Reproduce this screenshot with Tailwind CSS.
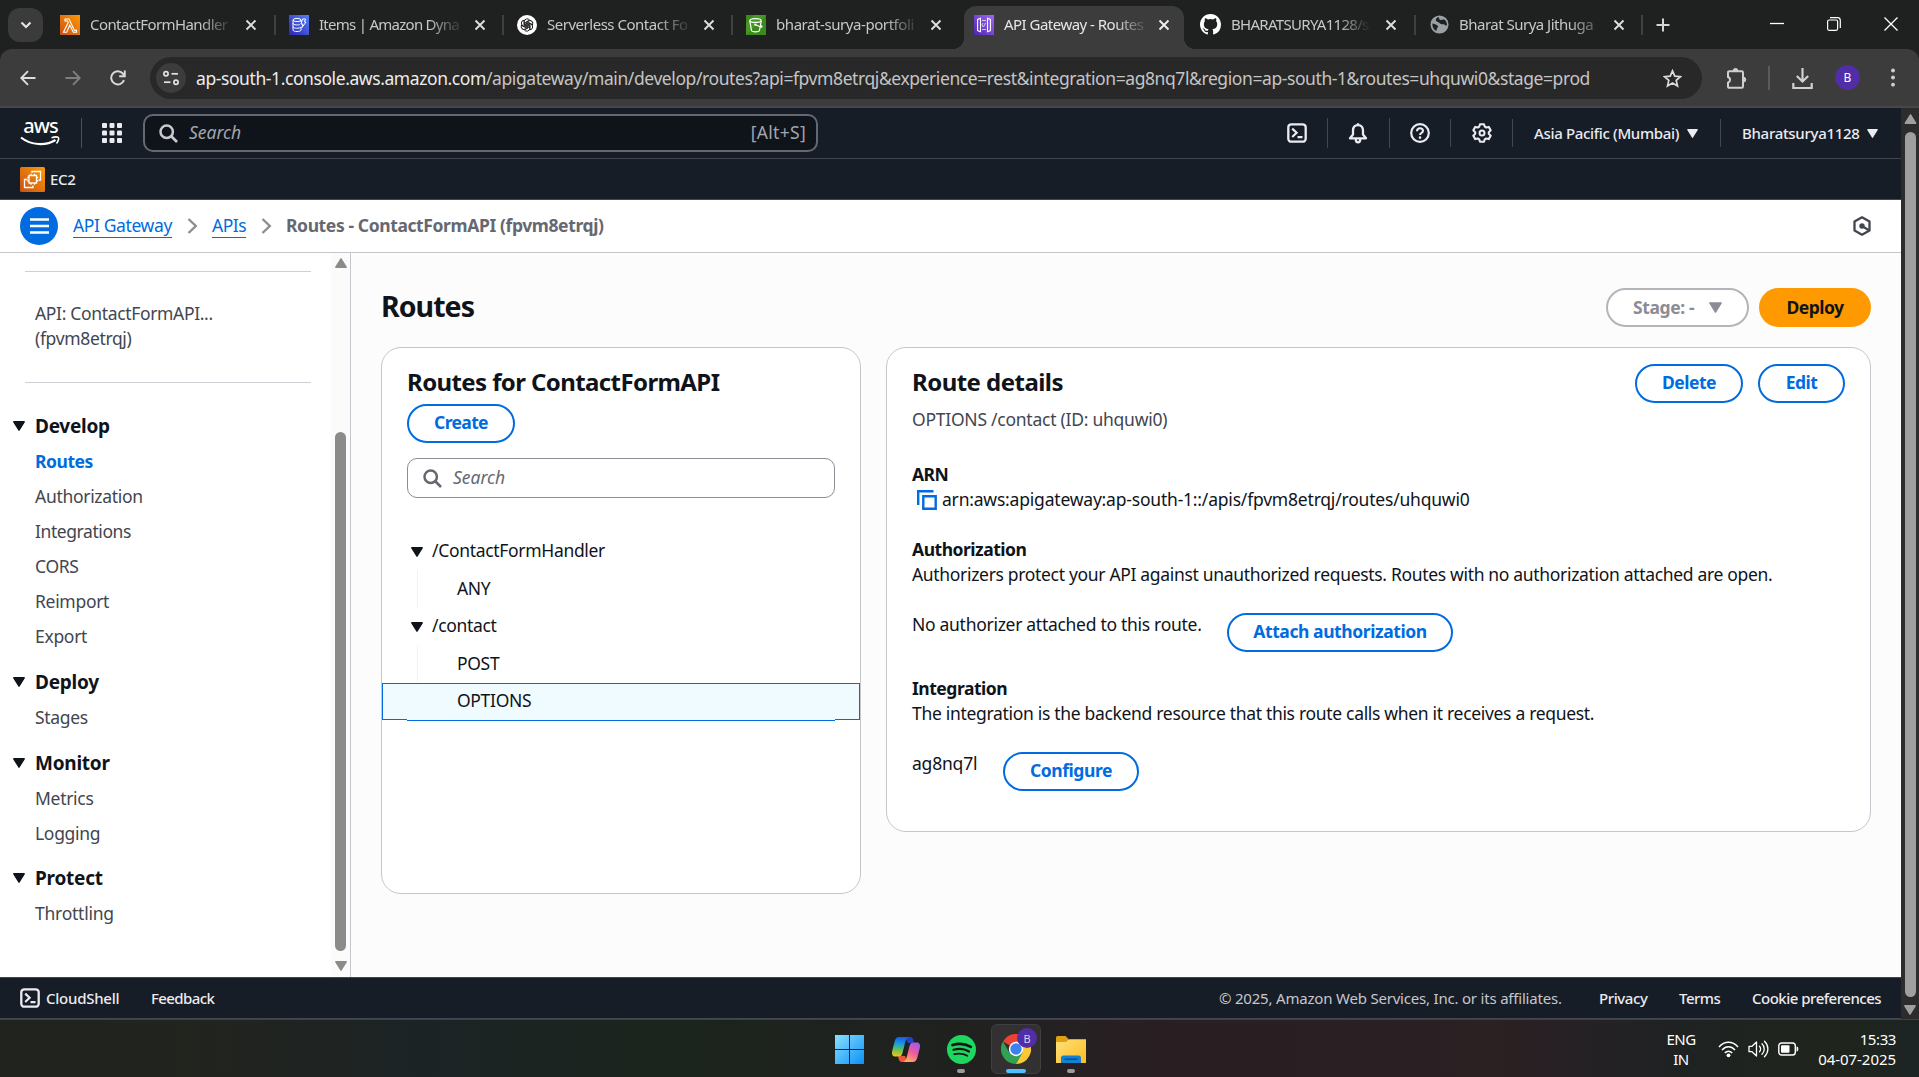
<!DOCTYPE html>
<html lang="en">
<head>
<meta charset="utf-8">
<title>API Gateway - Routes</title>
<script src="https://cdn.jsdelivr.net/npm/@tailwindcss/browser@4"></script>
</head>
<body class="h-[1077px] w-[1919px] overflow-hidden bg-[#1f2120] font-['Noto_Sans',sans-serif] text-[17.5px] leading-[25px] text-[#0f141a]">
<svg class="hidden">
  <symbol id="x" viewBox="0 0 12 12"><path d="M1.5 1.5l9 9M10.5 1.5l-9 9" stroke="currentColor" stroke-width="1.9" fill="none"/></symbol>
  <symbol id="tri" viewBox="0 0 12 10"><path d="M.8 .8h10.400L6 9.200z" fill="currentColor" stroke="currentColor" stroke-width="1.400" stroke-linejoin="round"/></symbol>
  <symbol id="mag" viewBox="0 0 19 19"><circle cx="7.7" cy="7.7" r="6.2" fill="none" stroke="currentColor" stroke-width="2.5"/><path d="M12 12l6 6" stroke="currentColor" stroke-width="2.6"/></symbol>
  <symbol id="shell" viewBox="0 0 20 20"><rect x="1.3" y="1.3" width="17.4" height="17.4" rx="3" fill="none" stroke="currentColor" stroke-width="2.3"/><path d="M5.2 5.6l4.4 4.2-4.4 4.2M10.5 14.2H15.500" fill="none" stroke="currentColor" stroke-width="2.2"/></symbol>
  <symbol id="chev" viewBox="0 0 11 16"><path d="M1.500 1l7.300 7-7.300 7" fill="none" stroke="#8c8c94" stroke-width="2.400"/></symbol>
</svg>
<div class="flex h-full flex-col">

<!-- tab strip -->
<div class="flex h-[49px] shrink-0 items-stretch bg-[#1f2120] text-[15px] text-[#c7c7c7]">
  <div class="flex w-12 shrink-0 items-center pl-2"><div class="flex h-[34px] w-[35px] items-center justify-center rounded-xl bg-[#3b3b3b]"><svg class="h-[8px] w-[12px]" viewBox="0 0 12 8"><path d="M1.500 1.500L6 6l4.500-4.500" fill="none" stroke="#e3e3e3" stroke-width="2.200"/></svg></div></div>

  <div class="flex w-[228px] shrink-0 items-center pl-3">
    <svg class="h-5 w-5 shrink-0" viewBox="0 0 20 20"><defs><linearGradient id="or" x1="0" y1="1" x2="1" y2="0"><stop stop-color="#c8511b"/><stop offset="1" stop-color="#f90"/></linearGradient></defs><rect width="20" height="20" fill="url(#or)"/><path d="M5 4h4l5.500 11.500L16.500 15v2.300h-3.200L9.800 10 6.700 17.300H3.500L8.200 7.500 7.500 6H5z" fill="none" stroke="#fff" stroke-width="1.100"/></svg>
    <span class="ml-2.5 w-[140px] overflow-hidden whitespace-nowrap tracking-[-0.58px] [mask-image:linear-gradient(to_right,black_78%,rgba(0,0,0,0.2)_98%)]">ContactFormHandler</span>
    <svg class="ml-[15px] h-3 w-3 text-[#dedede]"><use href="#x"/></svg><div class="ml-auto h-5 w-0.5 bg-[#3f4140]"></div>
  </div>
  <div class="flex w-[228px] shrink-0 items-center pl-[13px]">
    <svg class="h-5 w-5 shrink-0" viewBox="0 0 20 20"><defs><linearGradient id="bl" x1="0" y1="1" x2="1" y2="0"><stop stop-color="#2e27ad"/><stop offset="1" stop-color="#527fff"/></linearGradient></defs><rect width="20" height="20" fill="url(#bl)"/><g fill="none" stroke="#fff" stroke-width="1"><ellipse cx="8" cy="5" rx="4" ry="1.600"/><path d="M4 5v10c0 2 8 2 8 0v-3M4 8.300c0 2 6 2 7 1M4 11.700c0 2 7 2 8 .3M12 5v2M13.500 4h3l-1 3h1.500l-4 5.500.8-3.500H12z"/></g></svg>
    <span class="ml-2.5 w-[140px] overflow-hidden whitespace-nowrap tracking-[-0.73px] [mask-image:linear-gradient(to_right,black_78%,rgba(0,0,0,0.2)_98%)]">Items | Amazon Dyna</span>
    <svg class="ml-[15px] h-3 w-3 text-[#dedede]"><use href="#x"/></svg><div class="ml-auto h-5 w-0.5 bg-[#3f4140]"></div>
  </div>
  <div class="flex w-[229px] shrink-0 items-center pl-[13px]">
    <svg class="h-5 w-5 shrink-0" viewBox="0 0 20 20"><circle cx="10" cy="10" r="10" fill="#fff"/><g fill="none" stroke="#222" stroke-width="1"><g id="pet"><path d="M7.300 11.500V6.600a2.900 2.900 0 0 1 5.300-1.500L9 7.200v4.300"/></g><use href="#pet" transform="rotate(60 10 10)"/><use href="#pet" transform="rotate(120 10 10)"/><use href="#pet" transform="rotate(180 10 10)"/><use href="#pet" transform="rotate(240 10 10)"/><use href="#pet" transform="rotate(300 10 10)"/></g></svg>
    <span class="ml-2.5 w-[140px] overflow-hidden whitespace-nowrap tracking-[-0.48px] [mask-image:linear-gradient(to_right,black_78%,rgba(0,0,0,0.2)_98%)]">Serverless Contact Fo</span>
    <svg class="ml-[16px] h-3 w-3 text-[#dedede]"><use href="#x"/></svg><div class="ml-auto h-5 w-0.5 bg-[#3f4140]"></div>
  </div>
  <div class="flex w-[231px] shrink-0 items-center pl-[13px]">
    <svg class="h-5 w-5 shrink-0" viewBox="0 0 20 20"><rect width="20" height="20" fill="#3a8a1d"/><path d="M0 20L20 0H8L0 8z" fill="#56a52e" opacity=".5"/><g fill="none" stroke="#fff" stroke-width="1.200"><ellipse cx="9.500" cy="5.500" rx="5.700" ry="1.900"/><path d="M3.800 5.800l1.700 9.700c.3 1.700 7.700 1.700 8 0l1.700-9.700M9 9.500l5 2.300c2.500 1 2.500-.5 1-1.300"/></g><circle cx="9.300" cy="9.700" r="1.100" fill="#fff"/></svg>
    <span class="ml-2.5 w-[140px] overflow-hidden whitespace-nowrap tracking-[-0.43px] [mask-image:linear-gradient(to_right,black_78%,rgba(0,0,0,0.2)_98%)]">bharat-surya-portfoli</span>
    <svg class="ml-[14px] h-3 w-3 text-[#dedede]"><use href="#x"/></svg>
  </div>
  <!-- active tab, with its flared feet -->
  <div class="relative mt-1.5 flex w-[220px] shrink-0 items-center rounded-t-xl bg-[#3c3c3c] pb-1.5 pl-[10px] text-[#e6e6e6]">
    <div class="absolute bottom-0 -left-3 h-3 w-3 bg-[radial-gradient(circle_at_0_0,#1f2120_12px,#3c3c3c_12.500px)]"></div>
    <div class="absolute -right-3 bottom-0 h-3 w-3 bg-[radial-gradient(circle_at_100%_0,#1f2120_12px,#3c3c3c_12.500px)]"></div>
    <svg class="h-5 w-5 shrink-0" viewBox="0 0 20 20"><defs><linearGradient id="pu" x1="0" y1="1" x2="1" y2="0"><stop stop-color="#4d27aa"/><stop offset="1" stop-color="#a166ff"/></linearGradient></defs><rect width="20" height="20" fill="url(#pu)"/><path d="M6.500 3.200L3.600 4.400v11.200l2.900 1.200zM13.500 3.200l2.900 1.200v11.200l-2.900 1.200z" fill="none" stroke="#fff" stroke-width="1.100"/><path d="M8 5.500h4M8 14.500h4M9 8l-1 2 1 2M11.500 8l-2 4" fill="none" stroke="#fff" stroke-width=".7"/></svg>
    <span class="ml-2.5 w-[140px] overflow-hidden whitespace-nowrap tracking-[-0.52px] [mask-image:linear-gradient(to_right,black_78%,rgba(0,0,0,0.2)_98%)]">API Gateway - Routes</span>
    <svg class="ml-[14px] h-3 w-3 text-[#f0f0f0]"><use href="#x"/></svg>
  </div>
  <div class="flex w-[232px] shrink-0 items-center pl-[16px]">
    <svg class="h-[21px] w-[21px] shrink-0" viewBox="0 0 16 16"><path fill="#fff" d="M8 0C3.580 0 0 3.580 0 8c0 3.540 2.290 6.530 5.470 7.590.4.070.55-.17.55-.38 0-.19-.01-.82-.01-1.490-2.010.37-2.530-.49-2.690-.94-.09-.23-.48-.94-.82-1.130-.28-.15-.68-.52-.01-.53.63-.01 1.080.58 1.230.82.72 1.210 1.870.87 2.330.66.07-.52.28-.87.51-1.070-1.780-.2-3.640-.89-3.640-3.950 0-.87.31-1.590.82-2.150-.08-.2-.36-1.020.08-2.120 0 0 .67-.21 2.200.82a7.600 7.600 0 0 1 4 0c1.530-1.040 2.200-.82 2.200-.82.44 1.100.16 1.920.08 2.120.51.560.82 1.270.82 2.150 0 3.070-1.870 3.750-3.650 3.950.29.25.54.73.54 1.480 0 1.070-.01 1.930-.01 2.200 0 .21.15.46.55.38A8.010 8.010 0 0 0 16 8c0-4.420-3.580-8-8-8z"/></svg>
    <span class="ml-[10px] w-[138px] overflow-hidden whitespace-nowrap tracking-[-0.7px] [mask-image:linear-gradient(to_right,black_78%,rgba(0,0,0,0.1)_98%)]">BHARATSURYA1128/s</span>
    <svg class="ml-[16px] h-3 w-3 text-[#dedede]"><use href="#x"/></svg><div class="ml-auto h-5 w-0.5 bg-[#3f4140]"></div>
  </div>
  <div class="flex w-[227px] shrink-0 items-center pl-[14px]">
    <svg class="h-[19px] w-[19px] shrink-0" viewBox="0 0 20 20"><circle cx="10" cy="10" r="9.500" fill="#9aa0a6"/><path d="M2.500 9c2 0 3 1 4.500 1.500s2 1.800.8 2.800-.3 2.600-1.300 3.600C4 15.500 2.200 12.500 2.500 9zM8 2.300c2.500 0 1 2 2.600 2.700s3.400-1 4.800.1c2 1.700 2.600 4 2.400 6-1.300.3-2-.6-2.700-1.200s-2.700.3-4.200-.8-2.300-1.600-3.600-2.200S5.500 4 8 2.300z" fill="#202221"/></svg>
    <span class="ml-[10px] w-[140px] overflow-hidden whitespace-nowrap tracking-[-0.51px] [mask-image:linear-gradient(to_right,black_78%,rgba(0,0,0,0.3)_98%)]">Bharat Surya Jithuga</span>
    <svg class="ml-[14px] h-3 w-3 text-[#dedede]"><use href="#x"/></svg><div class="ml-auto h-5 w-0.5 bg-[#3f4140]"></div>
  </div>
  <div class="flex grow items-center pl-[13px]">
    <svg class="h-3.5 w-3.5" viewBox="0 0 14 14"><path d="M7 .5v13M.5 7h13" stroke="#d5d5d5" stroke-width="2"/></svg>
  </div>
  <div class="flex w-[166px] items-center justify-between pr-[21px] pb-0.5 pl-[17px]">
    <svg class="h-3.5 w-3.5" viewBox="0 0 14 14"><path d="M0 6.500h14" stroke="#fff" stroke-width="1.300"/></svg>
    <svg class="h-3.5 w-3.5" viewBox="0 0 14 14"><rect x=".6" y="3" width="10" height="10.300" rx="1.500" fill="none" stroke="#fff" stroke-width="1.200"/><path d="M3 .7h7.500a2.800 2.800 0 0 1 2.800 2.800v7.500" fill="none" stroke="#fff" stroke-width="1.200"/></svg>
    <svg class="h-3.5 w-3.5" viewBox="0 0 14 14"><path d="M.5.5l13 13M13.500.5l-13 13" stroke="#fff" stroke-width="1.300"/></svg>
  </div>
</div>

<!-- toolbar -->
<div class="h-[59px] shrink-0 bg-[#1f2120]">
<div class="flex h-full items-center rounded-t-xl border-b-2 border-[#474747] bg-[#3c3c3c]">
  <div class="flex w-[150px] items-center gap-[29px] pl-[20px]">
    <svg class="h-4 w-4" viewBox="0 0 16 16"><path d="M15.500 8H1.500M8 1.200L1.300 8 8 14.800" fill="none" stroke="#dcdcdc" stroke-width="1.900"/></svg>
    <svg class="h-4 w-4" viewBox="0 0 16 16"><path d="M.5 8h14M8 1.200L14.700 8 8 14.800" fill="none" stroke="#7f7f7f" stroke-width="1.900"/></svg>
    <svg class="h-4 w-4" viewBox="0 0 16 16"><path d="M14 10.200A6.600 6.600 0 1 1 12.800 3.500L14.500 5.300" fill="none" stroke="#dcdcdc" stroke-width="1.900"/><path d="M14.800.5v5.700H9.200" fill="none" stroke="#dcdcdc" stroke-width="1.900"/></svg>
  </div>
  <div class="flex h-[42px] w-[1552px] shrink-0 items-center rounded-full bg-[#282828] pl-[6px] text-[#c4c4c4]">
    <div class="flex h-[30px] w-[30px] items-center justify-center rounded-full bg-[#3c3c3c]"><svg class="h-4 w-4" viewBox="0 0 16 16"><g fill="none" stroke="#e3e3e3" stroke-width="1.700"><circle cx="3" cy="3.800" r="2.100"/><path d="M8.500 3.800H15"/><circle cx="13" cy="12.200" r="2.100"/><path d="M1 12.200h6.500"/></g></svg></div>
    <div class="ml-[10px] pt-0.5 tracking-[-0.415px] whitespace-nowrap"><span class="text-[#ececec]">ap-south-1.console.aws.amazon.com</span>/apigateway/main/develop/routes?api=fpvm8etrqj&amp;experience=rest&amp;integration=ag8nq7l&amp;region=ap-south-1&amp;routes=uhquwi0&amp;stage=prod</div>
    <svg class="mt-0.5 mr-[20px] ml-auto h-[19px] w-[19px]" viewBox="0 0 19 19"><path d="M9.500 1.800l2.300 5.300 5.700.5-4.300 3.800 1.300 5.600-5-3-5 3 1.300-5.600L1.500 7.600l5.700-.5z" fill="none" stroke="#dcdcdc" stroke-width="1.700"/></svg>
  </div>
  <div class="flex grow items-center">
    <svg class="ml-[24px] h-[22px] w-[21px]" viewBox="0 0 21 22"><path d="M2 5.500a1.300 1.300 0 0 1 1.300-1.300h12.400A1.300 1.300 0 0 1 17 5.500v14a1.300 1.300 0 0 1-1.300 1.300H3.300A1.300 1.300 0 0 1 2 19.500V15.700a3 3 0 0 0 0-5.700z" fill="none" stroke="#d0d0d0" stroke-width="2"/><path d="M7 4.200a2.500 2.800 0 0 1 5 0zM17 10a2.800 2.600 0 0 1 0 5.200z" fill="#d0d0d0" stroke="#d0d0d0"/></svg>
    <div class="ml-[21px] h-[24px] w-0.5 bg-[#5b5b5b]"></div>
    <svg class="mt-0.5 ml-[22px] h-[22px] w-[21px]" viewBox="0 0 21 22"><path d="M10.500 0v12.500M4.800 8l5.700 5.500L16.200 8M1.300 15v5h18.400v-5" fill="none" stroke="#d0d0d0" stroke-width="2.200"/></svg>
    <div class="ml-[22px] flex h-[25px] w-[25px] items-center justify-center rounded-full bg-[#512da8] text-[12px] text-white">B</div>
    <svg class="ml-[31px] h-[20px] w-1" viewBox="0 0 4 20"><g fill="#d0d0d0"><circle cx="2" cy="2.500" r="1.900"/><circle cx="2" cy="9.500" r="1.900"/><circle cx="2" cy="16.700" r="1.900"/></g></svg>
  </div>
</div>
</div>

<!-- page -->
<div class="flex h-[911px] shrink-0">
<div class="flex w-[1901px] flex-col">
  <!-- console header -->
  <div class="flex h-[51px] shrink-0 items-center border-b border-[#424650] bg-[#161d26] text-[15px] font-medium text-[#ebebf0]">
    <div class="flex w-[60px] flex-col items-end">
      <div class="h-[17px] w-[39px] text-center text-[20px] leading-[13px] font-medium tracking-[-0.9px] text-white">aws</div>
      <svg class="h-[11px] w-[40px]" viewBox="0 0 40 11"><path d="M1 1.500C11 9.500 26 10 35.500 4" fill="none" stroke="#fff" stroke-width="2.200"/><path d="M31.500 1.800c3-1 6-1 6.800-.3s0 4-1.800 6" fill="none" stroke="#fff" stroke-width="1.600"/></svg>
    </div>
    <div class="ml-[21px] h-[30px] w-px bg-[#4a4f59]"></div>
    <svg class="ml-[20px] h-5 w-5" viewBox="0 0 20 20"><g fill="#ebebf0"><rect width="5" height="5" rx="1"/><rect x="7.500" width="5" height="5" rx="1"/><rect x="15" width="5" height="5" rx="1"/><rect y="7.500" width="5" height="5" rx="1"/><rect x="7.500" y="7.500" width="5" height="5" rx="1"/><rect x="15" y="7.500" width="5" height="5" rx="1"/><rect y="15" width="5" height="5" rx="1"/><rect x="7.500" y="15" width="5" height="5" rx="1"/><rect x="15" y="15" width="5" height="5" rx="1"/></g></svg>
    <div class="ml-[21px] flex h-[38px] w-[675px] items-center rounded-[10px] border-2 border-[#656871] bg-[#0f141a] px-[14px] text-[17.500px] font-normal text-[#a4a4ad]">
      <svg class="h-[19px] w-[19px] text-[#c9c9d0]"><use href="#mag"/></svg>
      <span class="ml-[11px] pb-px italic">Search</span><span class="mr-[-4px] ml-auto pb-px tracking-[0.3px]">[Alt+S]</span>
    </div>
    <div class="ml-auto flex items-center">
      <svg class="h-5 w-5"><use href="#shell"/></svg>
      <div class="ml-[20px] h-[30px] w-px bg-[#424650]"></div>
      <svg class="ml-[20px] h-[21px] w-5" viewBox="0 0 20 21"><path d="M10 2.200c-3.500 0-5 2.500-5 5.500v3.800L2 15.300h16l-3-3.800V7.700c0-3-1.500-5.500-5-5.500zM10 .3v2M7.800 16.500c0 3.800 4.400 3.800 4.400 0" fill="none" stroke="currentColor" stroke-width="2.300" stroke-linejoin="round"/></svg>
      <div class="ml-[21px] h-[30px] w-px bg-[#424650]"></div>
      <svg class="ml-[20px] h-5 w-5" viewBox="0 0 20 20"><circle cx="10" cy="10" r="8.800" fill="none" stroke="currentColor" stroke-width="2.200"/><path d="M7 8.300C7 4.300 13 4.300 13 7.700c0 2.300-3 2.300-3 4.300" fill="none" stroke="currentColor" stroke-width="2.100"/><circle cx="10" cy="14.600" r="1.300" fill="currentColor"/></svg>
      <div class="ml-[20px] h-[28px] w-px bg-[#424650]"></div>
      <svg class="ml-[21px] h-5 w-5" viewBox="0 0 20 20"><path d="M8 1.200h4l.8 2.500 1.300.8 2.600-.6 2 3.400-1.900 1.900v1.600l1.900 1.900-2 3.400-2.600-.6-1.300.8-.8 2.500H8l-.8-2.500-1.300-.8-2.600.6-2-3.400 1.900-1.900V9.200L1.300 7.300l2-3.400 2.600.6 1.300-.8z" fill="none" stroke="currentColor" stroke-width="2.100" stroke-linejoin="round"/><circle cx="10" cy="10" r="2.500" fill="none" stroke="currentColor" stroke-width="2"/></svg>
      <div class="ml-[20px] h-[28px] w-px bg-[#424650]"></div>
      <span class="ml-[21px] w-[146px] tracking-[-0.34px] whitespace-nowrap">Asia Pacific (Mumbai)</span>
      <svg class="ml-[7px] h-[9px] w-[11px]"><use href="#tri"/></svg>
      <div class="ml-[22px] h-[28px] w-px bg-[#424650]"></div>
      <span class="ml-[21px] w-[118px] tracking-[-0.3px] whitespace-nowrap">Bharatsurya1128</span>
      <svg class="mr-[23px] ml-[7px] h-[9px] w-[11px]"><use href="#tri"/></svg>
    </div>
  </div>
  <div class="flex h-[41px] shrink-0 items-center border-b border-[#424650] bg-[#161d26] pl-5 text-[15px] font-medium text-[#ebebf0]">
    <svg class="h-[25px] w-[25px]" viewBox="0 0 25 25"><rect width="25" height="25" rx="1.500" fill="url(#or)"/><path d="M9 8.500h7.500V16H9zM11 8.500V6.800M14.500 8.500V6.800M11 16v1.700M14.500 16v1.700M9 10.500H7.300M9 14H7.300M16.500 10.500h1.700M16.500 14h1.700M7.500 12.500h-3V20.500H13v-2M12 6V4.500h8.500V13h-2" fill="none" stroke="#fff" stroke-width="1.300"/></svg>
    <span class="ml-[5px] tracking-[-0.3px]">EC2</span>
  </div>
  <!-- breadcrumb -->
  <div class="flex h-[53px] shrink-0 items-center border-b border-[#c6c6cd] bg-white pl-5 text-[#006ce0]">
    <div class="flex h-[38px] w-[38px] items-center justify-center rounded-full bg-[#006ce0]"><svg class="h-4 w-[19px]" viewBox="0 0 19 16"><path d="M0 1.500h19M0 8h19M0 14.500h19" stroke="#fff" stroke-width="2.300"/></svg></div>
    <span class="ml-[15px] h-[23px] w-[99px] border-b border-[#006ce0] leading-[20px] tracking-[-0.38px] whitespace-nowrap">API Gateway</span>
    <svg class="ml-[15px] h-4 w-[11px]"><use href="#chev"/></svg>
    <span class="ml-[14px] h-[23px] w-[34px] border-b border-[#006ce0] leading-[20px] tracking-[-0.5px] whitespace-nowrap">APIs</span>
    <svg class="ml-[15px] h-4 w-[11px]"><use href="#chev"/></svg>
    <span class="ml-[14px] pb-0.5 font-bold tracking-[-0.39px] text-[#656871]">Routes - ContactFormAPI (fpvm8etrqj)</span>
    <svg class="mr-[30px] ml-auto h-5 w-[18px]" viewBox="0 0 18 20"><path d="M9 1.300l7.500 4.300v8.800L9 18.700 1.500 14.400V5.600z" fill="none" stroke="#424650" stroke-width="2.300" stroke-linejoin="round"/><circle cx="9" cy="10" r="2.700" fill="#424650"/><path d="M9 10l6.500 4" stroke="#424650" stroke-width="2.200"/></svg>
  </div>

  <div class="flex h-[724px] shrink-0">
    <!-- side navigation -->
    <div class="flex w-[351px] shrink-0 border-r border-[#c6c6cd] bg-white">
      <div class="w-[331px] text-[#424650]">
        <div class="mt-[18px] ml-[25px] h-px w-[286px] bg-[#cfcfd6]"></div>
        <div class="mt-[29px] ml-[35px] tracking-[-0.34px]">API: ContactFormAPI...<br>(fpvm8etrqj)</div>
        <div class="mt-[31px] ml-[25px] h-px w-[286px] bg-[#cfcfd6]"></div>
        <div class="mt-[25px] flex h-[36px] items-center pl-[13px] text-[19px] font-bold tracking-[-0.25px] text-[#0f141a]"><svg class="mr-[10px] h-[10px] w-3"><use href="#tri"/></svg>Develop</div>
        <ul class="pl-[35px] leading-[35px] tracking-[-0.3px]"><li class="font-bold tracking-[-0.45px] text-[#006ce0]">Routes</li><li>Authorization</li><li class="tracking-[-0.42px]">Integrations</li><li>CORS</li><li>Reimport</li><li>Export</li></ul>
        <div class="mt-[10px] flex h-[36px] items-center pl-[13px] text-[19px] font-bold tracking-[-0.25px] text-[#0f141a]"><svg class="mr-[10px] h-[10px] w-3"><use href="#tri"/></svg>Deploy</div>
        <ul class="pl-[35px] leading-[35px] tracking-[-0.3px]"><li>Stages</li></ul>
        <div class="mt-[10px] flex h-[36px] items-center pl-[13px] text-[19px] font-bold tracking-[-0.25px] text-[#0f141a]"><svg class="mr-[10px] h-[10px] w-3"><use href="#tri"/></svg>Monitor</div>
        <ul class="pl-[35px] leading-[35px] tracking-[-0.3px]"><li>Metrics</li><li>Logging</li></ul>
        <div class="mt-[9px] flex h-[36px] items-center pl-[13px] text-[19px] font-bold tracking-[-0.25px] text-[#0f141a]"><svg class="mr-[10px] h-[10px] w-3"><use href="#tri"/></svg>Protect</div>
        <ul class="pl-[35px] leading-[35px] tracking-[-0.25px]"><li>Throttling</li></ul>
      </div>
      <div class="flex grow flex-col items-center bg-[#fbfbfb] pt-[5px] text-[#8b8b8b]">
        <svg class="h-[10px] w-3 rotate-180"><use href="#tri"/></svg>
        <div class="mt-[164px] h-[519px] w-[11px] rounded-full bg-[#8b8b8b]"></div>
        <svg class="mt-[10px] h-[10px] w-3"><use href="#tri"/></svg>
      </div>
    </div>

    <!-- main -->
    <div class="grow bg-[#fcfcfd] pt-[35px] pr-[30px] pl-[30px]">
      <div class="flex h-[39px] items-center">
        <h1 class="pb-0.5 text-[28.500px] font-bold tracking-[-0.95px]">Routes</h1>
        <div class="ml-auto flex h-[39px] w-[143px] items-center rounded-full border-2 border-[#b4b4bb] bg-white pb-px pl-[25px] font-bold tracking-[-0.4px] text-[#8c8c94]">Stage: -<svg class="ml-[15px] h-[11px] w-[13px]"><use href="#tri"/></svg></div>
        <div class="ml-[10px] flex h-[39px] w-[112px] items-center justify-center rounded-full bg-[#ff9900] pb-px font-bold tracking-[-0.5px]">Deploy</div>
      </div>
      <div class="mt-5 flex items-start justify-between">
        <section class="h-[547px] w-[480px] rounded-[20px] border border-[#c6c6cd] bg-white pt-[18px]">
          <div class="px-[25px]">
            <h2 class="h-[33px] text-[24px] leading-[31px] font-bold tracking-[-0.6px] whitespace-nowrap">Routes for ContactFormAPI</h2>
            <div class="mt-[5px] flex h-[39px] w-[108px] items-center justify-center rounded-full border-2 border-[#006ce0] pb-0.5 font-bold tracking-[-0.65px] text-[#006ce0]">Create</div>
            <div class="mt-[15px] flex h-[40px] items-center rounded-[10px] border border-[#8c8c94] pl-[15px] text-[#656871]"><svg class="h-[19px] w-[19px]"><use href="#mag"/></svg><span class="ml-[11px] pb-0.5 italic">Search</span></div>
          </div>
          <div class="mt-[35px] tracking-[-0.32px]">
            <div class="flex h-[37px] items-center pl-[29px]"><svg class="mr-[9px] h-[10px] w-3"><use href="#tri"/></svg><span class="pb-0.5">/ContactFormHandler</span></div>
            <div class="ml-[35px] flex h-[38px] items-center border-l border-[#ebf6fb] pb-0.5 pl-[39px]">ANY</div>
            <div class="flex h-[37px] items-center pl-[29px]"><svg class="mr-[9px] h-[10px] w-3"><use href="#tri"/></svg><span class="pb-0.5">/contact</span></div>
            <div class="ml-[35px] flex h-[38px] items-center border-l border-[#ebf6fb] pb-0.5 pl-[39px]">POST</div>
            <div class="relative flex h-[37px] items-center border border-[#006ce0] bg-[#f0fbff] pb-0.5 pl-[74px]">OPTIONS<div class="absolute inset-x-[24px] -bottom-[2px] h-[2px] border-b border-[#006ce0] bg-[#f0fbff]"></div></div>
          </div>
        </section>
        <section class="h-[485px] w-[985px] rounded-[20px] border border-[#c6c6cd] bg-white px-[25px] pt-[16px]">
          <div class="flex h-[39px]">
            <h2 class="text-[24px] leading-[35px] font-bold tracking-[-0.54px]">Route details</h2>
            <div class="ml-auto flex h-[39px] w-[108px] items-center justify-center rounded-full border-2 border-[#006ce0] pb-0.5 font-bold tracking-[-0.5px] text-[#006ce0]">Delete</div>
            <div class="ml-[15px] flex h-[39px] w-[87px] items-center justify-center rounded-full border-2 border-[#006ce0] pb-0.5 font-bold tracking-[-0.5px] text-[#006ce0]">Edit</div>
          </div>
          <p class="mt-[4px] tracking-[-0.25px] text-[#424650]">OPTIONS /contact (ID: uhquwi0)</p>
          <h3 class="mt-[30px] font-bold tracking-[-0.5px]">ARN</h3>
          <div class="flex h-[25px] items-center pl-[5px]"><svg class="mt-px h-5 w-5" viewBox="0 0 20 20"><path d="M1.200 15V1.200h15.300M6.300 6.300h12.400v12.400H6.300z" fill="none" stroke="#006ce0" stroke-width="2.400"/></svg><span class="ml-[5px] tracking-[-0.2px]">arn:aws:apigateway:ap-south-1::/apis/fpvm8etrqj/routes/uhquwi0</span></div>
          <h3 class="mt-[25px] font-bold tracking-[-0.48px]">Authorization</h3>
          <p class="tracking-[-0.325px]">Authorizers protect your API against unauthorized requests. Routes with no authorization attached are open.</p>
          <div class="mt-[25px] flex h-[40px] items-start"><span class="w-[290px] tracking-[-0.29px] whitespace-nowrap">No authorizer attached to this route.</span><div class="mt-px ml-[25px] flex h-[39px] w-[226px] items-center justify-center rounded-full border-2 border-[#006ce0] pb-0.5 font-bold tracking-[-0.42px] text-[#006ce0]">Attach authorization</div></div>
          <h3 class="mt-[24px] font-bold tracking-[-0.48px]">Integration</h3>
          <p class="tracking-[-0.315px]">The integration is the backend resource that this route calls when it receives a request.</p>
          <div class="mt-[25px] flex h-[40px] items-start"><span class="w-[66px] tracking-[-0.2px]">ag8nq7l</span><div class="mt-px ml-[25px] flex h-[39px] w-[136px] items-center justify-center rounded-full border-2 border-[#006ce0] pb-0.5 font-bold tracking-[-0.45px] text-[#006ce0]">Configure</div></div>
        </section>
      </div>
    </div>
  </div>
  <!-- console footer -->
  <div class="flex h-[42px] shrink-0 items-center border-y border-[#424650] bg-[#161d26] pl-5 text-[15px] font-medium text-[#ebebf0]">
    <svg class="h-5 w-5"><use href="#shell"/></svg>
    <span class="ml-[6px] w-[74px] tracking-[-0.25px]">CloudShell</span>
    <span class="ml-[31px] tracking-[-0.6px]">Feedback</span>
    <span class="ml-auto w-[343px] font-normal tracking-[-0.2px] whitespace-nowrap text-[#c6c6cd]">© 2025, Amazon Web Services, Inc. or its affiliates.</span>
    <span class="ml-[37px] w-[49px] tracking-[-0.4px]">Privacy</span>
    <span class="ml-[31px] w-[42px] tracking-[-0.5px]">Terms</span>
    <span class="mr-[20px] ml-[31px] w-[129px] tracking-[-0.5px] whitespace-nowrap">Cookie preferences</span>
  </div>
</div>
<!-- page scrollbar -->
<div class="flex grow flex-col items-center bg-[#2c2c2c] pt-[6px] text-[#9f9f9f]">
  <svg class="h-[10px] w-[13px] rotate-180"><use href="#tri"/></svg>
  <div class="mt-[8px] h-[865px] w-[11px] rounded-full bg-[#9f9f9f]"></div>
  <svg class="mt-[8px] h-[10px] w-3"><use href="#tri"/></svg>
</div>
</div>

<!-- taskbar -->
<div class="flex h-[58px] shrink-0 border-t border-[#3f4142] [background-image:linear-gradient(90deg,#20231e_0,#22241e_10%,#1c2325_22%,#1b241d_34%,#20211f_50%,#232122_54%,#291f22_60%,#2b2022_78%,#262126_82%,#1e2221_88%,#1f251c_96%,#1c2324_100%)]">
  <div class="flex w-[1260px] items-center pt-px pl-[835px]">
    <svg class="h-[29px] w-[29px]" viewBox="0 0 29 29"><defs><linearGradient id="w" x1="0" y1="0" x2="1" y2="1"><stop stop-color="#8be0ff"/><stop offset="1" stop-color="#0a91f5"/></linearGradient></defs><path d="M0 0h14v14H0zM15 0h14v14H15zM0 15h14v14H0zM15 15h14v14H15z" fill="url(#w)"/></svg>
    <svg class="ml-[27px] h-[27px] w-[30px]" viewBox="0 0 30 27"><defs><linearGradient id="c1" x1=".3" y1="0" x2=".2" y2="1"><stop stop-color="#1b5fe0"/><stop offset=".35" stop-color="#1a9fe0"/><stop offset=".65" stop-color="#6cc24a"/><stop offset="1" stop-color="#fcc419"/></linearGradient><linearGradient id="c2" x1=".8" y1="0" x2=".3" y2="1"><stop stop-color="#a259f0"/><stop offset=".5" stop-color="#ee5a9a"/><stop offset="1" stop-color="#ffb05a"/></linearGradient></defs><path d="M14 1h5c2.500 0 3 1.500 4 5.500l-6 1z" fill="#1d47c9"/><path d="M16 26h-5c-2.500 0-3-1.500-4-5.500l7-1z" fill="#f0563a"/><path d="M8 1h10c-3 1-3.500 4-4.500 8l-2 8c-1 3-2 3.500-4 3.500H4.500c-3 0-4-2-3.300-5.500l2.300-9C4.500 2.500 5.500 1 8 1z" fill="url(#c1)"/><path d="M22 26H12c3-1 3.500-4 4.500-8l2-8c1-3 2-3.500 4-3.500h3c3 0 4 2 3.300 5.500l-2.300 9c-1 3.500-2 5-4.500 5z" fill="url(#c2)"/><path d="M16.500 7h2.500l-4.200 13h-2.600z" fill="#20221f"/></svg>
    <div class="relative ml-[26px] h-[29px] w-[29px]"><svg class="h-[29px] w-[29px]" viewBox="0 0 29 29"><circle cx="14.500" cy="14.500" r="14.500" fill="#1ed760"/><g fill="none" stroke="#191414" stroke-linecap="round"><path d="M5.500 10c6-1.800 13-1.200 18.300 1.800" stroke-width="2.700"/><path d="M6.500 14.800c5.500-1.500 11-1 15.500 1.700" stroke-width="2.200"/><path d="M7.300 19.200c4.500-1.200 9-.8 13 1.600" stroke-width="1.800"/></g></svg><div class="absolute top-[34px] left-[10px] h-1 w-2 rounded-full bg-[#9b9b9b]"></div></div>
    <div class="relative ml-[15px] flex h-[50px] w-[50px] items-center justify-center rounded-md border border-[#403e40] bg-[#323031]">
      <svg class="h-[30px] w-[30px]" viewBox="0 0 30 30"><path d="M15 15L2 7.500A15 15 0 0 1 28 7.500z" fill="#ea4335"/><path d="M2 7.500A15 15 0 0 0 15 30l6.500-11.300L8.500 18.700z" fill="#34a053"/><path d="M28 7.500A15 15 0 0 1 15 30l6.500-11.300L15 7.500z" fill="#fcc934"/><circle cx="15" cy="15" r="7.200" fill="#fff"/><circle cx="15" cy="15" r="5.700" fill="#3a82f0"/></svg>
      <div class="absolute top-[3px] left-[25px] flex h-5 w-5 items-center justify-center rounded-full bg-[#512da8] text-[11px] text-[#d9cff0]">B</div>
      <div class="absolute top-[44px] left-[14px] h-1 w-5 rounded-full bg-[#4cc2ff]"></div>
    </div>
    <div class="relative ml-[15px] h-[27px] w-[30px]"><svg class="h-[27px] w-[30px]" viewBox="0 0 30 27"><defs><linearGradient id="f" x1="0" y1="0" x2="1" y2="1"><stop stop-color="#ffe07a"/><stop offset="1" stop-color="#fdbd1f"/></linearGradient></defs><path d="M0 1.500Q0 0 1.500 0h8l3 3v6H0z" fill="#e0a010"/><path d="M0 6h10l3-2.800h17V27H0z" fill="url(#f)"/><path d="M5 27v-5q0-2.500 2.500-2.500h15Q25 19.500 25 22v5z" fill="#1380d4"/><path d="M8.500 23.200h13" stroke="#0b4f90" stroke-width="1.500"/></svg><div class="absolute top-[33px] left-[11px] h-1 w-2 rounded-full bg-[#9b9b9b]"></div></div>
  </div>
  <div class="flex grow items-center justify-end pr-[23px] text-[15px] leading-[20px] text-white">
    <div class="w-[32px] text-center tracking-[-0.5px]">ENG<br>IN</div>
    <svg class="ml-[21px] h-[18px] w-[21px]" viewBox="0 0 21 18"><g fill="none" stroke="#fff" stroke-width="1.500"><path d="M1 7C6.500.8 14.500.8 20 7M4 10c4-4.300 9-4.300 13 0M6.800 13c2.200-2.500 5.200-2.500 7.400 0"/></g><circle cx="10.500" cy="15.300" r="1.900" fill="#fff"/></svg>
    <svg class="ml-[9px] h-[18px] w-[21px]" viewBox="0 0 21 18"><g fill="none" stroke="#fff" stroke-width="1.300"><path d="M1 6.300h3L8.500 2v14L4 11.700H1z" stroke-linejoin="round"/><path d="M11.500 6.300c1.500 1.500 1.500 3.900 0 5.400M14 3.800c3 3 3 7.400 0 10.400M16.500 1.300c4.500 4.500 4.500 10.900 0 15.400" stroke-linecap="round"/></g></svg>
    <svg class="ml-[9px] h-[14px] w-[21px]" viewBox="0 0 21 14"><rect x=".8" y="1" width="16.500" height="12" rx="2.800" fill="none" stroke="#fff" stroke-width="1.400"/><rect x="3" y="3.200" width="8.500" height="7.600" rx="1" fill="#fff"/><path d="M18.500 4.500c1.500.3 1.800 1 1.800 2.500s-.3 2.200-1.800 2.500z" fill="#fff"/></svg>
    <div class="ml-[17px] w-[80px] text-right whitespace-nowrap"><span class="tracking-[-0.4px]">15:33</span><br><span class="tracking-[-0.05px]">04-07-2025</span></div>
  </div>
</div>
</div>
</body>
</html>
